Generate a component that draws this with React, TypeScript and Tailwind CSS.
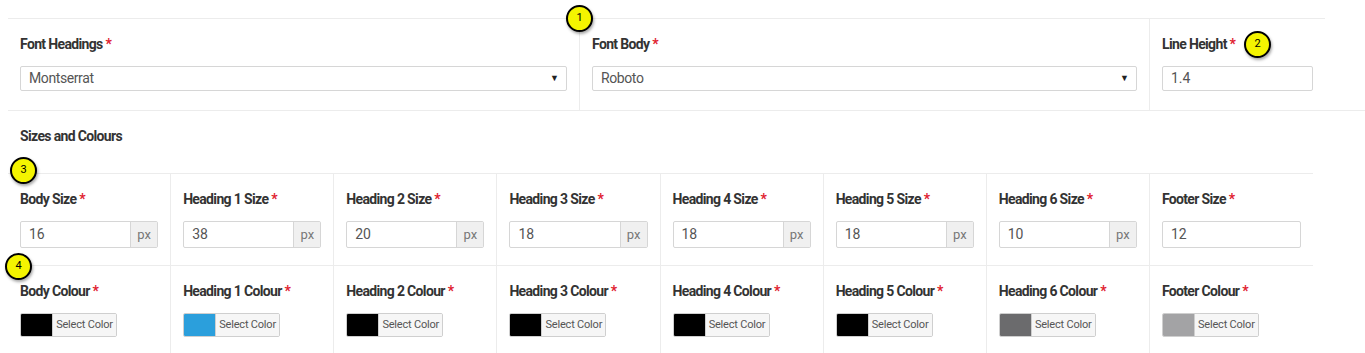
import React from "react";

const sizes = [
  { label: "Body Size", value: "16", px: true },
  { label: "Heading 1 Size", value: "38", px: true },
  { label: "Heading 2 Size", value: "20", px: true },
  { label: "Heading 3 Size", value: "18", px: true },
  { label: "Heading 4 Size", value: "18", px: true },
  { label: "Heading 5 Size", value: "18", px: true },
  { label: "Heading 6 Size", value: "10", px: true },
  { label: "Footer Size", value: "12", px: false },
];

const colours = [
  { label: "Body Colour", swatch: "bg-[#000000]" },
  { label: "Heading 1 Colour", swatch: "bg-[#2b9fdc]" },
  { label: "Heading 2 Colour", swatch: "bg-[#000000]" },
  { label: "Heading 3 Colour", swatch: "bg-[#000000]" },
  { label: "Heading 4 Colour", swatch: "bg-[#000000]" },
  { label: "Heading 5 Colour", swatch: "bg-[#000000]" },
  { label: "Heading 6 Colour", swatch: "bg-[#6b6b6d]" },
  { label: "Footer Colour", swatch: "bg-[#a3a3a5]" },
];

function Label({ text }: { text: string }) {
  return (
    <div className="h-5 leading-5 text-[14px] font-bold text-[#333] tracking-[-0.65px] whitespace-nowrap">
      {text} <span className="text-[#e0202e]">*</span>
    </div>
  );
}

function Badge({ n, className }: { n: number; className: string }) {
  return (
    <div
      className={`absolute w-[27px] h-[27px] rounded-full bg-[#f4f400] border-[2.5px] border-black flex items-center justify-center text-[11px] text-black shadow-[1px_2px_3px_rgba(0,0,0,0.35)] ${className}`}
    >
      {n}
    </div>
  );
}

function Select({ value }: { value: string }) {
  return (
    <div className="h-[25px] border border-[#d6d6d6] rounded-[2px] flex items-center justify-between pl-2 pr-[7px] text-[14px] text-[#555]">
      <span className="tracking-[-0.4px]">{value}</span>
      <span className="text-[9px] text-[#222]">▼</span>
    </div>
  );
}

export default function App() {
  return (
    <div className="relative h-[353px] w-full overflow-hidden bg-white pt-[18px] font-['Roboto',sans-serif]">
      {/* fonts row */}
      <div className="ml-[8px] border-b border-[#ececec]">
        <div className="w-[1317px] border-t border-[#ececec] flex">
          <div className="w-[572px] border-r border-[#ececec] px-3 pt-[15px] pb-[19px]">
            <Label text="Font Headings" />
            <div className="mt-3">
              <Select value="Montserrat" />
            </div>
          </div>
          <div className="w-[570px] border-r border-[#ececec] px-3 pt-[15px] pb-[19px]">
            <Label text="Font Body" />
            <div className="mt-3">
              <Select value="Roboto" />
            </div>
          </div>
          <div className="w-[175px] px-3 pt-[15px] pb-[19px]">
            <Label text="Line Height" />
            <div className="mt-3 w-[151px] h-[25px] border border-[#d6d6d6] rounded-[2px] flex items-center px-2 text-[14px] text-[#555]">
              1.4
            </div>
          </div>
        </div>
      </div>

      {/* section title */}
      <div className="ml-[8px] px-3 pt-[15px] h-[62px]">
        <div className="h-5 leading-5 text-[14px] font-bold text-[#333] tracking-[-0.65px]">Sizes and Colours</div>
      </div>

      {/* sizes */}
      <div className="ml-[8px] w-[1305px] grid grid-cols-8 border-t border-[#ececec]">
        {sizes.map((s, i) => (
          <div
            key={s.label}
            className={`px-3 pt-[15px] pb-[17px] ${i < 7 ? "border-r border-[#ececec]" : ""}`}
          >
            <Label text={s.label} />
            <div className="mt-3 h-[27px] flex border border-[#d6d6d6] rounded-[2px] text-[14px] text-[#555]">
              <div className="flex-1 flex items-center px-2">{s.value}</div>
              {s.px && (
                <div className="w-[27px] flex items-center justify-center bg-[#f0f0f0] border-l border-[#d6d6d6] text-[13px] text-[#777]">
                  px
                </div>
              )}
            </div>
          </div>
        ))}
      </div>

      {/* colours */}
      <div className="ml-[8px] w-[1305px] h-[88px] grid grid-cols-8 border-t border-[#ececec]">
        {colours.map((c, i) => (
          <div
            key={c.label}
            className={`px-3 pt-[15px] ${i < 7 ? "border-r border-[#ececec]" : ""}`}
          >
            <Label text={c.label} />
            <div className="mt-3 w-[97px] h-[24px] flex border border-[#cfcfcf] rounded-[2px] overflow-hidden">
              <div className={`w-[31px] ${c.swatch}`} />
              <div className="flex-1 flex items-center justify-center bg-[#f6f6f6] border-l border-[#cfcfcf] text-[11px] text-[#555] tracking-[-0.2px]">
                Select Color
              </div>
            </div>
          </div>
        ))}
      </div>

      <Badge n={1} className="left-[566px] top-[5px]" />
      <Badge n={2} className="left-[1244px] top-[31px]" />
      <Badge n={3} className="left-[10px] top-[157px]" />
      <Badge n={4} className="left-[5px] top-[253px]" />
    </div>
  );
}
